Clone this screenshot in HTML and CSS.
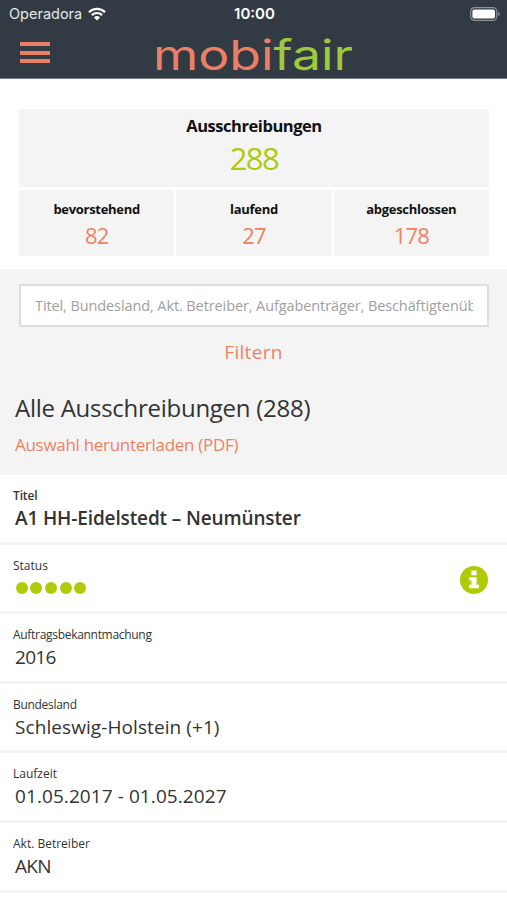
FILE: index.html
```
<!DOCTYPE html>
<html lang="de">
<head>
    <meta charset="UTF-8">
    <meta name="viewport" content="width=device-width, initial-scale=1.0">
    <title>mobifair</title>
    <link rel="stylesheet" href="styles.css">
</head>
<body>
    <header class="header">
        <div class="status-bar">
            <div class="carrier">
                <span>Operadora</span>
                <svg class="wifi" viewBox="0 0 18 14" width="18" height="14">
                    <path d="M1 5.2a11.4 11.4 0 0 1 16 0M3.9 8.1a7.3 7.3 0 0 1 10.2 0" fill="none" stroke="#fff" stroke-width="2.2"/>
                    <path d="M9 13.4L6 10.4a4.3 4.3 0 0 1 6 0z" fill="#fff"/>
                </svg>
            </div>
            <span class="time">10:00</span>
            <svg class="battery" viewBox="0 0 30 14" width="30" height="14">
                <rect x=".7" y=".7" width="26" height="12.6" rx="3.6" fill="none" stroke="#8b9196" stroke-width="1.2"/>
                <rect x="2.4" y="2.4" width="22.6" height="9.2" rx="1.8" fill="#fff"/>
                <path d="M28.2 4.8q1.6.6 1.6 2.2t-1.6 2.2z" fill="#8b9196"/>
            </svg>
        </div>
        <div class="nav-bar">
            <button class="menu-btn" aria-label="Menü">
                <span></span>
                <span></span>
                <span></span>
            </button>
            <svg class="logo" viewBox="0 0 210 51" width="210" height="51">
                <text x="3" y="42.5" textLength="200" lengthAdjust="spacingAndGlyphs"><tspan fill="#ea7f66">mobi</tspan><tspan fill="#9fc93c">fair</tspan></text>
            </svg>
        </div>
    </header>

    <section class="stats">
        <div class="stat stat-total">
            <h3>Ausschreibungen</h3>
            <p>288</p>
        </div>
        <div class="stat">
            <h4>bevorstehend</h4>
            <p>82</p>
        </div>
        <div class="stat">
            <h4>laufend</h4>
            <p>27</p>
        </div>
        <div class="stat">
            <h4>abgeschlossen</h4>
            <p>178</p>
        </div>
    </section>

    <section class="filter">
        <input class="search" type="text" placeholder="Titel, Bundesland, Akt. Betreiber, Aufgabenträger, Beschäftigtenübergang">
        <a class="filter-link" href="#">Filtern</a>
        <h2>Alle Ausschreibungen (288)</h2>
        <a class="download-link" href="#">Auswahl herunterladen (PDF)</a>
    </section>

    <section class="list">
        <div class="row row-title">
            <span class="label">Titel</span>
            <span class="value">A1 HH-Eidelstedt – Neumünster</span>
        </div>
        <div class="row row-status">
            <div>
                <span class="label">Status</span>
                <div class="dots"><i></i><i></i><i></i><i></i><i></i></div>
            </div>
            <svg class="info" viewBox="0 0 28 28" width="28" height="28">
                <circle cx="14" cy="14" r="14" fill="#b0ca08"/>
                <path d="M11.4 4.4h5.2v4.8h-5.2zM9.2 11.2h7.4v7.6h2.4v3.4H9.2v-3.4h2.2v-4.2H9.2z" fill="#fff"/>
            </svg>
        </div>
        <div class="row">
            <span class="label label-tight">Auftragsbekanntmachung</span>
            <span class="value value-tight">2016</span>
        </div>
        <div class="row">
            <span class="label label-tight">Bundesland</span>
            <span class="value">Schleswig-Holstein (+1)</span>
        </div>
        <div class="row">
            <span class="label">Laufzeit</span>
            <span class="value">01.05.2017 - 01.05.2027</span>
        </div>
        <div class="row">
            <span class="label">Akt. Betreiber</span>
            <span class="value value-tight">AKN</span>
        </div>
    </section>
</body>
</html>
```

FILE: styles.css
```
* {
    box-sizing: border-box;
}

body {
    margin: 0;
    height: 900px;
    overflow: hidden;
    background: #fff;
    color: #333;
    font-family: "Open Sans", sans-serif;
}

h2, h3, h4, p {
    margin: 0;
}

a {
    color: #ee8262;
    text-decoration: none;
}

.header {
    height: 79px;
    background: #323b44;
    border-bottom: 1px solid #737a80;
}

.status-bar {
    display: grid;
    grid-template-columns: 1fr auto 1fr;
    align-items: center;
    height: 27px;
    padding: 0 7px 0 9px;
    color: #fff;
    font-family: Inter, sans-serif;
    font-size: 14.5px;
}

.carrier {
    display: flex;
    align-items: center;
    gap: 6px;
    color: #e4e7e9;
}

.time {
    font-weight: 600;
    font-size: 15px;
}

.battery {
    justify-self: end;
}

.nav-bar {
    display: grid;
    grid-template-columns: 130px 1fr;
    height: 51px;
    padding-left: 20px;
}

.menu-btn {
    display: flex;
    flex-direction: column;
    gap: 4.5px;
    width: 30px;
    padding: 0;
    margin-top: 15px;
    border: none;
    background: none;
}

.menu-btn span {
    width: 30px;
    height: 4px;
    background: #ea7f66;
}

.logo {
    overflow: visible;
    font-family: Inter, sans-serif;
    font-size: 41px;
}

.stats {
    display: grid;
    grid-template-columns: repeat(3, 1fr);
    grid-template-rows: 78px 66px;
    gap: 3px 2px;
    height: 190px;
    padding: 30px 18px 0 19px;
    color: #111;
    text-align: center;
}

.stat {
    padding-top: 9px;
    background: #f4f4f4;
}

.stat h4 {
    font-size: 13px;
    line-height: 20px;
    letter-spacing: -0.3px;
}

.stat p {
    color: #ee8262;
    font-size: 22px;
    line-height: 32px;
    letter-spacing: -0.8px;
}

.stat-total {
    grid-column: 1 / -1;
    padding-top: 5px;
}

.stat-total h3 {
    font-size: 16.5px;
    line-height: 24px;
    letter-spacing: -0.45px;
}

.stat-total p {
    color: #b0ca08;
    font-size: 31px;
    line-height: 41px;
    letter-spacing: -1.5px;
}

.filter {
    display: flex;
    flex-direction: column;
    align-items: flex-start;
    height: 206px;
    padding: 15px 18px 0 15px;
    background: #f4f4f4;
}

.search {
    width: 470px;
    height: 43px;
    margin-left: 4px;
    padding: 0 14px;
    border: 2px solid #dedede;
    background: #fff;
    font-family: inherit;
    font-size: 14.5px;
    letter-spacing: -0.1px;
}

.search::placeholder {
    color: #a0a0a0;
    opacity: 1;
}

.filter-link {
    align-self: center;
    margin-top: 10px;
    padding-left: 3px;
    font-size: 19px;
    line-height: 30px;
    letter-spacing: 0.3px;
}

.filter h2 {
    margin-top: 24px;
    font-weight: 400;
    font-size: 24px;
    line-height: 34px;
    letter-spacing: -0.27px;
}

.download-link {
    margin-top: 8px;
    font-size: 17px;
    line-height: 24px;
    letter-spacing: -0.3px;
}

.row {
    display: flex;
    flex-direction: column;
    height: 69.6px;
    padding: 12px 19px 0 13px;
    border-bottom: 3px solid #f4f4f4;
}

.label {
    font-size: 12px;
    line-height: 17px;
}

.label-tight {
    letter-spacing: -0.3px;
}

.value {
    margin: 1px 0 0 2px;
    font-weight: 500;
    font-size: 19px;
    line-height: 27px;
    letter-spacing: 0.08px;
}

.value-tight {
    letter-spacing: -0.7px;
}

.row-title .label,
.row-title .value {
    font-weight: 600;
    letter-spacing: -0.13px;
}

.row-status {
    flex-direction: row;
    justify-content: space-between;
}

.row-status .label {
    display: block;
}

.dots {
    display: flex;
    gap: 2.7px;
    margin: 8px 0 0 2.5px;
}

.dots i {
    width: 12px;
    height: 12px;
    border-radius: 50%;
    background: #b0ca08;
}

.info {
    margin-top: 9px;
}
```
